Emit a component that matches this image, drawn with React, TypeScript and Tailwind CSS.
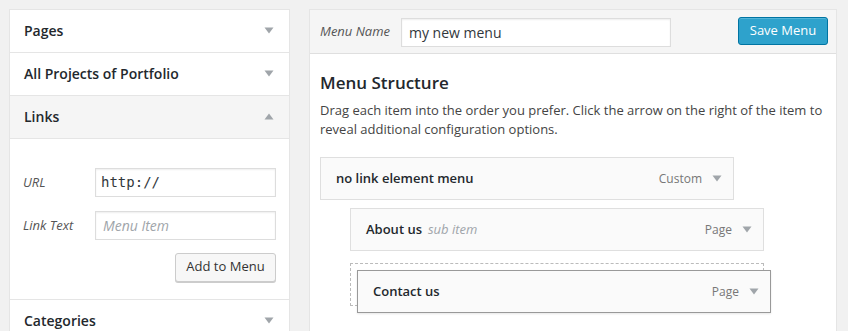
import React from "react";

const Down = ({ color = "#a0a5aa" }: { color?: string }) => (
  <svg width="10" height="7" viewBox="0 0 10 7" className="block">
    <polygon points="0.5,0.5 9.5,0.5 5,6.5" fill={color} />
  </svg>
);
const Up = () => (
  <svg width="10" height="7" viewBox="0 0 10 7" className="block">
    <polygon points="0.5,6.5 9.5,6.5 5,0.5" fill="#a0a5aa" />
  </svg>
);

function SideHeader({ title, open = false, last = false }: { title: string; open?: boolean; last?: boolean }) {
  return (
    <div
      className={`flex items-center justify-between h-[43px] pl-[14px] pr-[15px] pb-[2px] ${last ? "" : "border-b border-[#e5e5e5]"} ${
        open ? "bg-[#f5f5f5]" : "bg-white"
      }`}
    >
      <span className="text-[14px] font-semibold text-[#23282d]">{title}</span>
      {open ? <Up /> : <Down />}
    </div>
  );
}

function Item({ title, sub, type, strong = false }: { title: string; sub?: string; type: string; strong?: boolean }) {
  return (
    <div
      className={`flex items-center justify-between h-[43px] w-[414px] pl-[15px] pr-[11px] bg-[#fafafa] border ${
        strong ? "border-[#999] shadow-[0_1px_2px_rgba(0,0,0,0.1)]" : "border-[#dfdfdf]"
      }`}
    >
      <div className="flex items-baseline gap-[6px]">
        <span className="text-[13px] font-semibold text-[#23282d]">{title}</span>
        {sub && <span className="text-[13px] italic text-[#a0a5aa]">{sub}</span>}
      </div>
      <div className="flex items-center gap-[10px]">
        <span className="text-[12px] text-[#777]">{type}</span>
        <Down />
      </div>
    </div>
  );
}

export default function App() {
  return (
    <div
      className="w-[848px] h-[331px] overflow-hidden bg-[#f1f1f1] pt-[9px] pl-[9px] flex gap-[19px] items-start"
      style={{ fontFamily: '"Open Sans", "Noto Sans", sans-serif' }}
    >
      {/* Left panel */}
      <div className="w-[281px] shrink-0 bg-white border border-[#e5e5e5] border-b-0">
        <SideHeader title="Pages" />
        <SideHeader title="All Projects of Portfolio" />
        <SideHeader title="Links" open />
        <div className="h-[161px] border-b border-[#e5e5e5] pt-[29px] pl-[13px] pr-[13px]">
          <div className="flex items-center h-[29px]">
            <span className="w-[72px] text-[13px] italic text-[#555]">URL</span>
            <div className="w-[181px] h-[29px] border border-[#ddd] flex items-center pl-[5px] shadow-[inset_0_1px_2px_rgba(0,0,0,0.07)]">
              <span className="text-[14px] text-[#32373c]" style={{ fontFamily: '"DejaVu Sans Mono", "Liberation Mono", monospace' }}>
                http://
              </span>
            </div>
          </div>
          <div className="flex items-center h-[29px] mt-[14px]">
            <span className="w-[72px] text-[13px] italic text-[#555]">Link Text</span>
            <div className="w-[181px] h-[29px] border border-[#ddd] flex items-center pl-[7px] shadow-[inset_0_1px_2px_rgba(0,0,0,0.07)]">
              <span className="text-[14px] italic text-[#a0a5aa]">Menu Item</span>
            </div>
          </div>
          <div className="flex justify-end mt-[13px]">
            <div className="w-[101px] h-[29px] rounded-[3px] border border-[#ccc] bg-[#f7f7f7] shadow-[0_1px_0_#ccc] flex items-center justify-center text-[13px] text-[#333] pb-[1px]">
              Add to Menu
            </div>
          </div>
        </div>
        <SideHeader title="Categories" last />
      </div>

      {/* Right panel */}
      <div className="w-[528px] shrink-0 h-[340px] bg-white border border-[#e5e5e5]">
        <div className="h-[44px] bg-[#f5f5f5] border-b border-[#dfdfdf] flex items-center pl-[10px] pr-[8px]">
          <span className="text-[13px] italic text-[#555] w-[81px]">Menu Name</span>
          <div className="w-[270px] h-[29px] bg-white border border-[#ddd] flex items-center pl-[7px] mt-[1px] shadow-[inset_0_1px_2px_rgba(0,0,0,0.07)]">
            <span className="text-[14px] text-[#32373c]">my new menu</span>
          </div>
          <div className="ml-auto w-[90px] h-[28px] -mt-[2px] rounded-[3px] bg-[#2ea2cc] border border-[#0074a2] shadow-[inset_0_1px_0_rgba(120,200,230,0.5)] flex items-center justify-center text-[13px] text-white">
            Save Menu
          </div>
        </div>
        <div className="pl-[10px] pr-[10px] pt-[18px]">
          <div className="text-[17px] font-semibold text-[#23282d] leading-[22px]">Menu Structure</div>
          <p className="text-[13px] text-[#444] leading-[19px] mt-[7px]">
            Drag each item into the order you prefer. Click the arrow on the right of the item to reveal additional
            configuration options.
          </p>
          <div className="mt-[18px]">
            <Item title="no link element menu" type="Custom" />
            <div className="ml-[30px] mt-[8px]">
              <Item title="About us" sub="sub item" type="Page" />
            </div>
            <div className="ml-[30px] mt-[12px] relative w-[414px] h-[43px] border border-dashed border-[#bbb]">
              <div className="absolute left-[6px] top-[6px]">
                <Item title="Contact us" type="Page" strong />
              </div>
            </div>
          </div>
        </div>
      </div>
    </div>
  );
}
